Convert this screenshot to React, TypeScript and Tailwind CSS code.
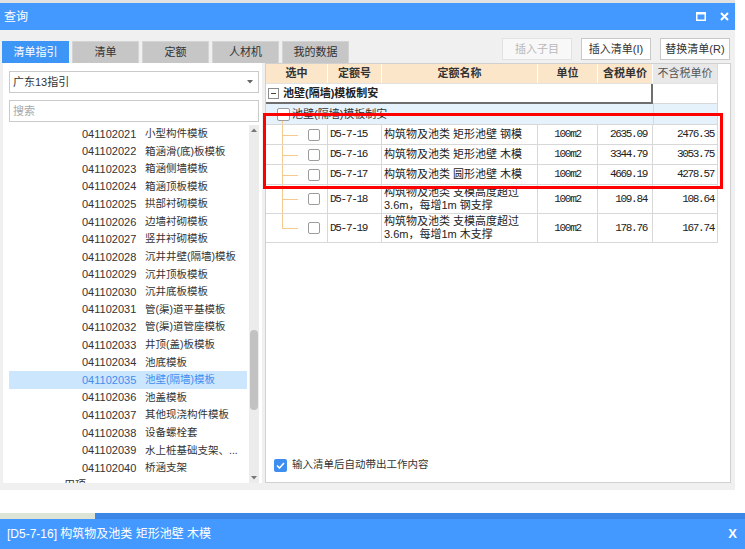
import React from 'react';

const listItems: [string, string][] = [
  ['041102021', '小型构件模板'],
  ['041102022', '箱涵滑(底)板模板'],
  ['041102023', '箱涵侧墙模板'],
  ['041102024', '箱涵顶板模板'],
  ['041102025', '拱部衬砌模板'],
  ['041102026', '边墙衬砌模板'],
  ['041102027', '竖井衬砌模板'],
  ['041102028', '沉井井壁(隔墙)模板'],
  ['041102029', '沉井顶板模板'],
  ['041102030', '沉井底板模板'],
  ['041102031', '管(渠)道平基模板'],
  ['041102032', '管(渠)道管座模板'],
  ['041102033', '井顶(盖)板模板'],
  ['041102034', '池底模板'],
  ['041102035', '池壁(隔墙)模板'],
  ['041102036', '池盖模板'],
  ['041102037', '其他现浇构件模板'],
  ['041102038', '设备螺栓套'],
  ['041102039', '水上桩基础支架、...'],
  ['041102040', '桥涵支架'],
];

type Row = {
  code: string;
  name: string[];
  unit: string;
  p1: string;
  p2: string;
  h: string;
  last?: boolean;
};

const rows: Row[] = [
  { code: 'D5-7-15', name: ['构筑物及池类 矩形池壁 钢模'], unit: '100m2', p1: '2635.09', p2: '2476.35', h: 'h-[20px]' },
  { code: 'D5-7-16', name: ['构筑物及池类 矩形池壁 木模'], unit: '100m2', p1: '3344.79', p2: '3053.75', h: 'h-[20px]' },
  { code: 'D5-7-17', name: ['构筑物及池类 圆形池壁 木模'], unit: '100m2', p1: '4669.19', p2: '4278.57', h: 'h-[20px]' },
  { code: 'D5-7-18', name: ['构筑物及池类 支模高度超过', '3.6m，每增1m 钢支撑'], unit: '100m2', p1: '109.84', p2: '108.64', h: 'h-[29px]' },
  { code: 'D5-7-19', name: ['构筑物及池类 支模高度超过', '3.6m，每增1m 木支撑'], unit: '100m2', p1: '178.76', p2: '167.74', h: 'h-[29px]', last: true },
];

const tabs = ['清单指引', '清单', '定额', '人材机', '我的数据'];

const Checkbox = ({ size = 'w-[12px] h-[12px]' }: { size?: string }) => (
  <span className={`relative block ${size} rounded-[2px] border border-[#9c9c9c] bg-white`} />
);

const DataRow = ({ r }: { r: Row }) => (
  <div className={`flex ${r.h} border-b border-[#d8d8d8]`}>
    <div className="relative w-[62px] border-r border-[#d8d8d8] flex items-center pl-[42px]">
      <span className={`absolute left-[16px] top-0 w-px bg-[#f6c98e] ${r.last ? 'h-1/2' : 'bottom-0'}`} />
      <span className="absolute left-[16px] top-1/2 w-[16px] h-px bg-[#f6c98e]" />
      <Checkbox />
    </div>
    <div className="w-[54px] border-r border-[#d8d8d8] flex items-center pl-[2px] font-['Liberation_Mono',monospace] text-[11px] tracking-[-1.3px] text-[#222]">
      {r.code}
    </div>
    <div className="w-[156px] border-r border-[#d8d8d8] flex flex-col justify-center pl-[2px] text-[11px] leading-[13px] text-[#222] whitespace-nowrap overflow-hidden">
      {r.name.map((n) => (
        <span key={n}>{n}</span>
      ))}
    </div>
    <div className="w-[60px] border-r border-[#d8d8d8] flex items-center justify-center font-['Liberation_Mono',monospace] text-[11px] tracking-[-1.3px] text-[#222]">
      {r.unit}
    </div>
    <div className="w-[55px] border-r border-[#d8d8d8] flex items-center justify-end pr-[5px] font-['Liberation_Mono',monospace] text-[11px] tracking-[-1.3px] text-[#222]">
      {r.p1}
    </div>
    <div className="w-[65px] border-r border-[#d8d8d8] flex items-center justify-end pr-[3px] font-['Liberation_Mono',monospace] text-[11px] tracking-[-1.3px] text-[#222]">
      {r.p2}
    </div>
  </div>
);

export default function App() {
  return (
    <div className="relative w-[745px] h-[549px] overflow-hidden bg-white font-['Liberation_Sans','Noto_Sans_CJK_SC',sans-serif] text-[#333]">
      {/* window */}
      <div className="w-[735px] h-[490px] bg-[#f0f0f0] flex flex-col">
        <div className="shrink-0 h-[3px] bg-[#e2e2e2]" />
        <div className="shrink-0 h-[27px] bg-[#4399ff] flex items-center justify-between pl-[4px] pr-[6px]">
          <span className="text-[12px] text-white">查询</span>
          <div className="flex items-center gap-[14px]">
            <svg width="10" height="9" viewBox="0 0 10 9">
              <rect x="0.75" y="1" width="8.5" height="7.25" fill="none" stroke="white" strokeWidth="1.5" />
              <rect x="0" y="0" width="10" height="2.5" fill="white" />
            </svg>
            <svg width="9" height="9" viewBox="0 0 9 9">
              <path d="M1 1 L8 8 M8 1 L1 8" stroke="white" strokeWidth="2" />
            </svg>
          </div>
        </div>

        {/* tabs + buttons */}
        <div className="shrink-0 h-[33px] flex items-end justify-between pl-[2px] pr-[5px]">
          <div className="flex gap-[3px]">
            {tabs.map((t, i) => (
              <div
                key={t}
                className={`w-[67px] h-[22px] flex items-center justify-center text-[11px] ${
                  i === 0 ? 'bg-[#3d96f5] text-white' : 'bg-[#c6c6c6] text-[#333] border-t border-x border-[#d4d4d4]'
                }`}
              >
                {t}
              </div>
            ))}
          </div>
          <div className="flex gap-[9px] mb-[3px]">
            <div className="w-[70px] h-[22px] flex items-center justify-center border border-[#e2e2e2] bg-[#f8f8f8] text-[11px] text-[#b8b8b8]">插入子目</div>
            <div className="w-[70px] h-[22px] flex items-center justify-center border border-[#c8c8c8] bg-white text-[11px] text-[#333]">插入清单(I)</div>
            <div className="w-[70px] h-[22px] flex items-center justify-center border border-[#c8c8c8] bg-white text-[11px] text-[#333]">替换清单(R)</div>
          </div>
        </div>

        {/* main */}
        <div className="flex-1 min-h-0 flex gap-[3px] pl-[3px] pb-[7px]">
          {/* left panel */}
          <div className="w-[259px] min-h-0 bg-white flex flex-col pl-[6px]">
            <div className="shrink-0 mt-[8px] w-[250px] h-[22px] border border-[#cacaca] flex items-center justify-between pl-[3px] pr-[5px]">
              <span className="text-[11px] text-[#333]">广东13指引</span>
              <svg width="6" height="4" viewBox="0 0 6 4"><path d="M0 0 H6 L3 3.5 Z" fill="#666" /></svg>
            </div>
            <div className="shrink-0 mt-[7px] w-[250px] h-[22px] border border-[#cacaca] flex items-center pl-[3px]">
              <span className="text-[11px] text-[#a8a8a8]">搜索</span>
            </div>
            <div className="mt-[3px] flex-1 min-h-0 flex gap-[2px] overflow-hidden">
              <div className="w-[238px] min-h-0 flex flex-col overflow-hidden">
                {listItems.map(([c, n]) => {
                  const sel = c === '041102035';
                  return (
                    <div
                      key={c}
                      className={`shrink-0 h-[17.6px] flex items-center pl-[73px] text-[11px] whitespace-nowrap ${
                        sel ? 'bg-[#cce6fd] text-[#3f8ef0]' : 'text-[#333]'
                      }`}
                    >
                      <span className="w-[63px]">{c}</span>
                      <span className="text-[10.5px]">{n}</span>
                    </div>
                  );
                })}
                <div className="shrink-0 h-[17.6px] flex items-center pl-[55px] text-[11px] text-[#333]">用项</div>
              </div>
              <div className="w-[10px] bg-[#ececec] flex flex-col items-center">
                <div className="h-[10px] flex items-center">
                  <svg width="6" height="4" viewBox="0 0 6 4"><path d="M0 4 H6 L3 0.5 Z" fill="#777" /></svg>
                </div>
                <div className="h-[195px]" />
                <div className="w-[8px] h-[80px] rounded-[4px] bg-[#c2c2c2]" />
                <div className="flex-1" />
                <div className="h-[10px] flex items-center">
                  <svg width="6" height="4" viewBox="0 0 6 4"><path d="M0 0 H6 L3 3.5 Z" fill="#777" /></svg>
                </div>
              </div>
            </div>
          </div>

          {/* right panel */}
          <div className="w-[466px] min-h-0 bg-white border border-[#d0d0d0] flex flex-col">
            <div className="w-[452px] flex flex-col">
              {/* header */}
              <div className="flex h-[20px] bg-[#fce6c9] border-b border-[#e2e2e2] text-[11px] font-bold text-[#333]">
                <div className="w-[62px] border-r border-white flex items-center justify-center">选中</div>
                <div className="w-[54px] border-r border-white flex items-center justify-center">定额号</div>
                <div className="w-[156px] border-r border-white flex items-center justify-center">定额名称</div>
                <div className="w-[60px] border-r border-white flex items-center justify-center">单位</div>
                <div className="w-[55px] border-r border-white flex items-center justify-center">含税单价</div>
                <div className="w-[65px] bg-[#e8e8e8] border-r border-[#dcdcdc] flex items-center justify-center font-normal text-[#555]">不含税单价</div>
              </div>
              {/* group row */}
              <div className="flex h-[20px]">
                <div className="w-[387px] border-b-2 border-r-2 border-[#6e6e6e] flex items-center pl-[2px] gap-[4px]">
                  <span className="w-[11px] h-[11px] border border-[#8c8c8c] flex items-center justify-center">
                    <span className="w-[5px] h-px bg-[#444]" />
                  </span>
                  <span className="text-[11px] font-bold text-[#222]">池壁(隔墙)模板制安</span>
                </div>
                <div className="w-[65px] border-r border-b border-[#d8d8d8]" />
              </div>
              {/* sub group row */}
              <div className="flex h-[21px] bg-[#e5f1fb] border-b border-[#d8d8d8]">
                <div className="relative w-[387px] flex items-center pl-[11px] gap-[2px]">
                  <span className="absolute left-[16px] top-[12px] bottom-0 w-px bg-[#f6c98e]" />
                  <Checkbox size="w-[13px] h-[13px]" />
                  <span className="text-[11px] text-[#333]">池壁(隔墙)模板制安</span>
                </div>
                <div className="w-[65px] border-l border-r border-[#d8d8d8]" />
              </div>
              {rows.map((r) => (
                <DataRow key={r.code} r={r} />
              ))}
            </div>
            <div className="flex-1" />
            <div className="flex items-center gap-[5px] pl-[8px] pb-[9px]">
              <span className="w-[13px] h-[13px] rounded-[2px] bg-[#3d8ef0] flex items-center justify-center">
                <svg width="9" height="7" viewBox="0 0 9 7">
                  <path d="M1 3.5 L3.5 6 L8 1" stroke="white" strokeWidth="1.6" fill="none" />
                </svg>
              </span>
              <span className="text-[10.5px] text-[#333]">输入清单后自动带出工作内容</span>
            </div>
          </div>
        </div>
      </div>

      {/* bottom status */}
      <div className="h-[23px]" />
      <div className="h-[6px] flex">
        <div className="w-[95px] bg-[#dde3d7]" />
        <div className="flex-1 bg-[#3b86e6]" />
      </div>
      <div className="h-[30px] bg-[#4399ff] flex items-center justify-between pl-[7px] pr-[8px] text-white">
        <span className="text-[12px]">[D5-7-16] 构筑物及池类 矩形池壁 木模</span>
        <span className="text-[13px] font-bold">X</span>
      </div>

      {/* red annotation box */}
      <div className="absolute left-[263px] top-[113px] w-[460px] h-[76px] border-[3px] border-[#ff0000]" />
    </div>
  );
}
